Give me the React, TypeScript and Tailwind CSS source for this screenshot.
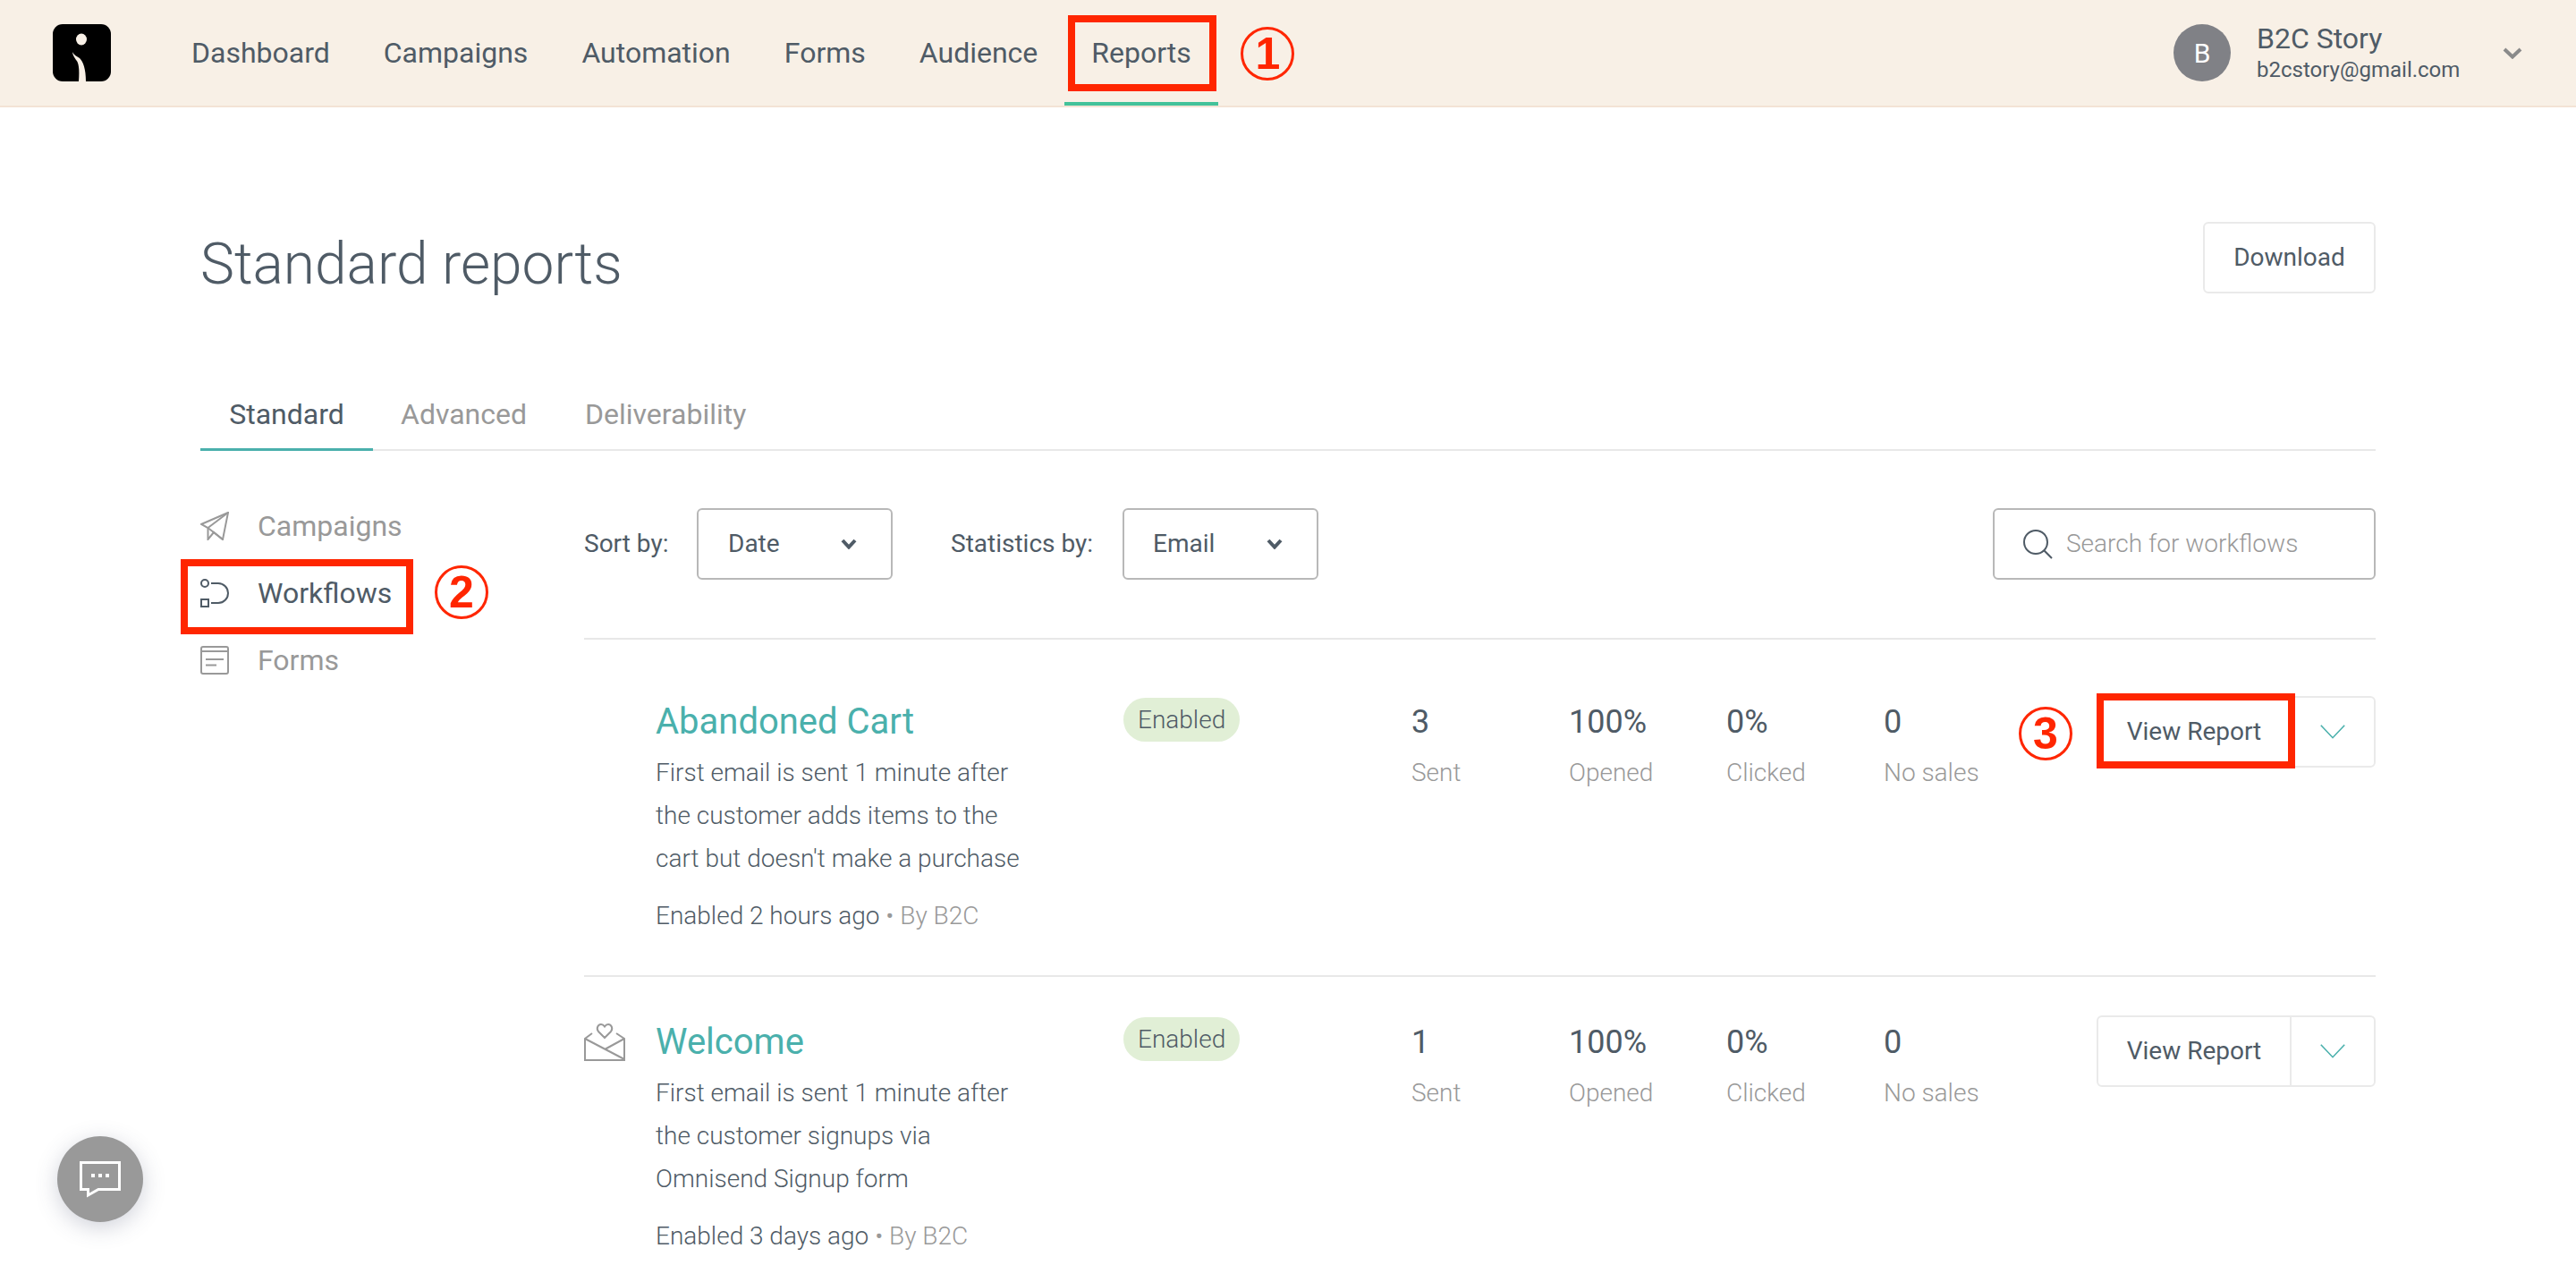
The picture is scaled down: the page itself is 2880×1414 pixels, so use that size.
import React from "react";

const Chevron = ({ className, sw = 3, w = 22, h = 13 }: { className?: string; sw?: number; w?: number; h?: number }) => (
  <svg width={w} height={h} viewBox={`0 0 ${w} ${h}`} fill="none" className={className}>
    <path d={`M${sw / 2} ${sw / 2} L${w / 2} ${h - sw / 2 - 0.5} L${w - sw / 2} ${sw / 2}`} stroke="currentColor" strokeWidth={sw} />
  </svg>
);

const Logo = () => (
  <svg width="65" height="64" viewBox="0 0 65 64" className="shrink-0">
    <rect width="65" height="64" rx="11" fill="#000" />
    <ellipse cx="32" cy="17" rx="6" ry="6.5" fill="#f8f0e6" />
    <path d="M22 31 C23 34 27 36 30 38 C34 42 37 50 37 64 L29 64 C30 50 29 43 26 40 C24 37 22 34 22 31 Z" fill="#f8f0e6" />
  </svg>
);

const PlaneIcon = () => (
  <svg width="32" height="32" viewBox="0 0 32 32" fill="none" stroke="#999" strokeWidth="2" className="shrink-0">
    <path d="M31 1 L1 14 L8.5 18 L8.5 31 L15 23 L25 31 Z" />
    <path d="M8.5 18 L31 1 M8.5 18 L25 31" />
  </svg>
);
const FlowIcon = () => (
  <svg width="32" height="32" viewBox="0 0 32 32" fill="none" stroke="#4f5b66" strokeWidth="2" className="shrink-0">
    <circle cx="5" cy="5" r="4" />
    <rect x="1" y="23" width="8" height="8" />
    <path d="M12 5 H20 A11 11 0 0 1 20 27 H12" />
  </svg>
);
const FormIcon = () => (
  <svg width="32" height="32" viewBox="0 0 32 32" fill="none" stroke="#999" strokeWidth="2" className="shrink-0">
    <rect x="1" y="1" width="30" height="30" rx="2" />
    <path d="M1 6 H31 M6 15 H26 M6 21.5 H18" />
  </svg>
);
const WelcomeIcon = () => (
  <svg width="46" height="42" viewBox="0 0 46 42" fill="none" stroke="#999" strokeWidth="2" className="shrink-0">
    <path d="M9 11 L1 17 V41 H45 V17 L36 11" />
    <path d="M1 17 L45 40 M24 28.5 L45 17" />
    <path d="M23 16 L16 9 C13 5 16 1 19 1 C21 1 22 2 23 3.5 C24 2 25 1 27 1 C30 1 33 5 30 9 Z" />
  </svg>
);

const Circled = ({ children, className }: { children: React.ReactNode; className: string }) => (
  <span
    className={`absolute flex h-[60px] w-[60px] items-center justify-center rounded-full border-[3px] border-[#ff2600] text-[50px] font-bold leading-none text-[#ff2600] font-['Liberation_Sans',sans-serif] ${className}`}
  >
    {children}
  </span>
);

const navItems = ["Dashboard", "Campaigns", "Automation", "Forms", "Audience"];

const stats = (a: string) => [
  { v: a, l: "Sent" },
  { v: "100%", l: "Opened" },
  { v: "0%", l: "Clicked" },
  { v: "0", l: "No sales" },
];

const Row = ({
  first,
  title,
  lines,
  when,
  sent,
  icon,
}: {
  first?: boolean;
  title: string;
  lines: string[];
  when: string;
  sent: string;
  icon?: React.ReactNode;
}) => (
  <div className={`flex border-t-2 border-[#e8e8e8] ${first ? "h-[377px] pt-[63px]" : "pt-[43px]"}`}>
    <div className="w-[80px] shrink-0 pt-[9px]">{icon}</div>
    <div className={`w-[523px] shrink-0 ${first ? "pt-[5px]" : "pt-[6px]"}`}>
      <div className="text-[40px] leading-[48px] text-[#4ab0ac]">{title}</div>
      <div className="mt-[9px] text-[28px] font-light leading-[48px]">
        {lines.map((l) => (
          <div key={l}>{l}</div>
        ))}
      </div>
      <div className="mt-[16px] text-[28px] font-light leading-[48px]">
        {when} <span className="text-[#999]">• By B2C</span>
      </div>
    </div>
    <div className="w-[322px] shrink-0 pt-[2px]">
      <span className="inline-flex h-[49px] items-center rounded-full bg-[#e1efd6] px-[16px] text-[28px] font-light">Enabled</span>
    </div>
    <div className={`flex ${first ? "pt-[5px]" : "pt-[6px]"}`}>
      {stats(sent).map((s) => (
        <div key={s.l} className="w-[176px] shrink-0">
          <div className="text-[36px] leading-[48px]">{s.v}</div>
          <div className="mt-[9px] text-[28px] font-light leading-[48px] text-[#999]">{s.l}</div>
        </div>
      ))}
    </div>
    <div className="relative ml-auto flex h-[80px] w-[312px] shrink-0 rounded-[6px] border-2 border-[#eaeaea]">
      <div className="flex w-[216px] items-center justify-center border-r-2 border-[#eaeaea] text-[28px]">View Report</div>
      <div className="flex flex-1 items-center justify-center text-[#4ab0ac]">
        <Chevron w={28} h={16} sw={1.6} />
      </div>
      {first && (
        <>
          <div className="absolute left-[-2px] top-[-5px] h-[84px] w-[222px] border-[8px] border-[#ff2600]" />
          <Circled className="left-[-89px] top-[10px]">3</Circled>
        </>
      )}
    </div>
  </div>
);

export default function App() {
  return (
    <div className="relative h-[1414px] overflow-hidden bg-white font-['Roboto',sans-serif] text-[#4f5b66]">
      <header className="flex h-[120px] items-center border-b-2 border-[#f3e3d5] bg-[#f8f0e6] pl-[59px] pr-[60px]">
        <Logo />
        <nav className="ml-[60px] flex h-full">
          {navItems.map((n) => (
            <div key={n} className="flex items-center px-[30px] text-[32px]">
              {n}
            </div>
          ))}
          <div className="relative flex items-center px-[30px] text-[32px]">
            Reports
            <div className="absolute bottom-0 left-0 right-0 h-[4px] bg-[#43c29a]" />
            <div className="absolute left-[4px] right-[2px] top-[17px] h-[85px] border-[8px] border-[#ff2600]" />
            <Circled className="left-[197px] top-[30px]">1</Circled>
          </div>
        </nav>
        <div className="ml-auto flex items-center">
          <div className="flex h-[64px] w-[64px] items-center justify-center rounded-full bg-[#808186] text-[30px] text-white">B</div>
          <div className="ml-[29px] w-[275px]">
            <div className="text-[32px] leading-[38px]">B2C Story</div>
            <div className="text-[24px] leading-[32px]">b2cstory@gmail.com</div>
          </div>
          <Chevron className="text-[#8a8a8a]" sw={4} />
        </div>
      </header>

      <main className="mx-[224px]">
        <div className="flex h-[300px] items-start justify-between pt-[128px]">
          <h1 className="mt-[2px] text-[64px] font-light leading-[92px]">Standard reports</h1>
          <button className="h-[80px] w-[193px] rounded-[6px] border-2 border-[#eaeaea] text-[28px]">Download</button>
        </div>
        <div className="flex h-[84px] border-b-2 border-[#e8e8e8] pt-[4px] text-[32px] text-[#999]">
          <div className="relative flex w-[193px] items-center justify-center text-[#4f5b66]">
            Standard
            <div className="absolute bottom-[-2px] left-0 right-0 h-[3px] bg-[#4ab0ac]" />
          </div>
          <div className="ml-[31px] flex items-center">Advanced</div>
          <div className="ml-[65px] flex items-center">Deliverability</div>
        </div>

        <div className="flex pt-[64px]">
          <aside className="mt-[-4px] w-[429px] shrink-0 text-[32px]">
            <div className="flex h-[47px] items-center gap-[32px] text-[#999]">
              <PlaneIcon />
              Campaigns
            </div>
            <div className="relative mt-[28px] flex h-[47px] items-center gap-[32px]">
              <FlowIcon />
              Workflows
              <div className="absolute left-[-22px] top-[-14px] h-[84px] w-[260px] border-[8px] border-[#ff2600]" />
              <Circled className="left-[262px] top-[-7px]">2</Circled>
            </div>
            <div className="mt-[28px] flex h-[47px] items-center gap-[32px] text-[#999]">
              <FormIcon />
              Forms
            </div>
          </aside>

          <section className="flex-1">
            <div className="flex h-[80px] items-center text-[28px]">
              <span className="w-[126px]">Sort by:</span>
              <div className="flex h-[80px] w-[219px] items-center justify-between rounded-[6px] border-2 border-[#b8b8b8] pl-[33px] pr-[38px]">
                Date
                <Chevron w={18} h={12} sw={4} />
              </div>
              <span className="ml-[65px] w-[192px]">Statistics by:</span>
              <div className="flex h-[80px] w-[219px] items-center justify-between rounded-[6px] border-2 border-[#b8b8b8] pl-[32px] pr-[38px]">
                Email
                <Chevron w={18} h={12} sw={4} />
              </div>
              <div className="ml-auto flex h-[80px] w-[428px] items-center rounded-[6px] border-2 border-[#b8b8b8] pl-[32px] text-[28px] font-light text-[#999]">
                <svg width="33" height="33" viewBox="0 0 33 33" fill="none" stroke="#4f5b66" strokeWidth="2" className="mr-[15px] shrink-0">
                  <circle cx="14" cy="14" r="13" />
                  <path d="M23 23 L32 32" />
                </svg>
                Search for workflows
              </div>
            </div>
            <div className="mt-[65px]">
              <Row
                first
                title="Abandoned Cart"
                lines={["First email is sent 1 minute after", "the customer adds items to the", "cart but doesn't make a purchase"]}
                when="Enabled 2 hours ago"
                sent="3"
              />
              <Row
                title="Welcome"
                lines={["First email is sent 1 minute after", "the customer signups via", "Omnisend Signup form"]}
                when="Enabled 3 days ago"
                sent="1"
                icon={<WelcomeIcon />}
              />
            </div>
          </section>
        </div>
      </main>

      <div className="absolute left-[64px] top-[1270px] flex h-[96px] w-[96px] items-center justify-center rounded-full bg-[#999] shadow-[0_6px_24px_rgba(70,80,110,0.25)]">
        <svg width="46" height="42" viewBox="0 0 46 42" fill="none" className="mt-[2px]">
          <path d="M1.5 1.5 H44.5 V31.5 H21 L9.5 38 V31.5 H1.5 Z" stroke="#fff" strokeWidth="3" />
          <path d="M13 14 h4 v4 h-4 Z M21 14 h4 v4 h-4 Z M29 14 h4 v4 h-4 Z" fill="#fff" />
        </svg>
      </div>
    </div>
  );
}
